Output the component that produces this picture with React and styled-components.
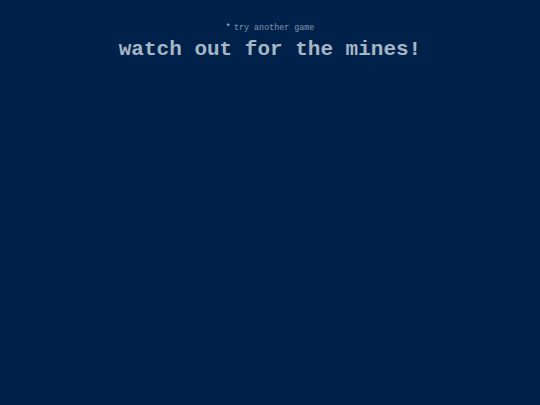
import React from 'react';
import styled, { createGlobalStyle } from 'styled-components';

const GlobalStyle = createGlobalStyle`
  html, body {
    margin: 0;
    padding: 0;
    background: #00224a;
    height: 100%;
  }
  #root {
    min-height: 100%;
  }
`;

const Page = styled.div`
  min-height: 405px;
  background: #00224a;
  font-family: "Liberation Mono", "DejaVu Sans Mono", monospace;
  color: #a8b8c9;
  display: flex;
  flex-direction: column;
  align-items: center;
  padding-top: 22px;
  box-sizing: border-box;
`;

const TryLink = styled.a`
  font-size: 8.4px;
  line-height: 12px;
  color: #8296ab;
  text-decoration: none;
  display: flex;
  align-items: center;
  gap: 3px;
`;

const Star = styled.span`
  font-size: 9px;
  color: #b4c2d1;
`;

const Title = styled.h1`
  margin: 3px 0 0;
  font-size: 21px;
  line-height: 26px;
  font-weight: bold;
  color: #a7b6c6;
`;

const App = () => {
  return (
    <>
      <GlobalStyle />
      <Page>
        <TryLink href="#">
          <Star>*</Star>
          try another game
        </TryLink>
        <Title>watch out for the mines!</Title>
      </Page>
    </>
  );
};

export default App;
